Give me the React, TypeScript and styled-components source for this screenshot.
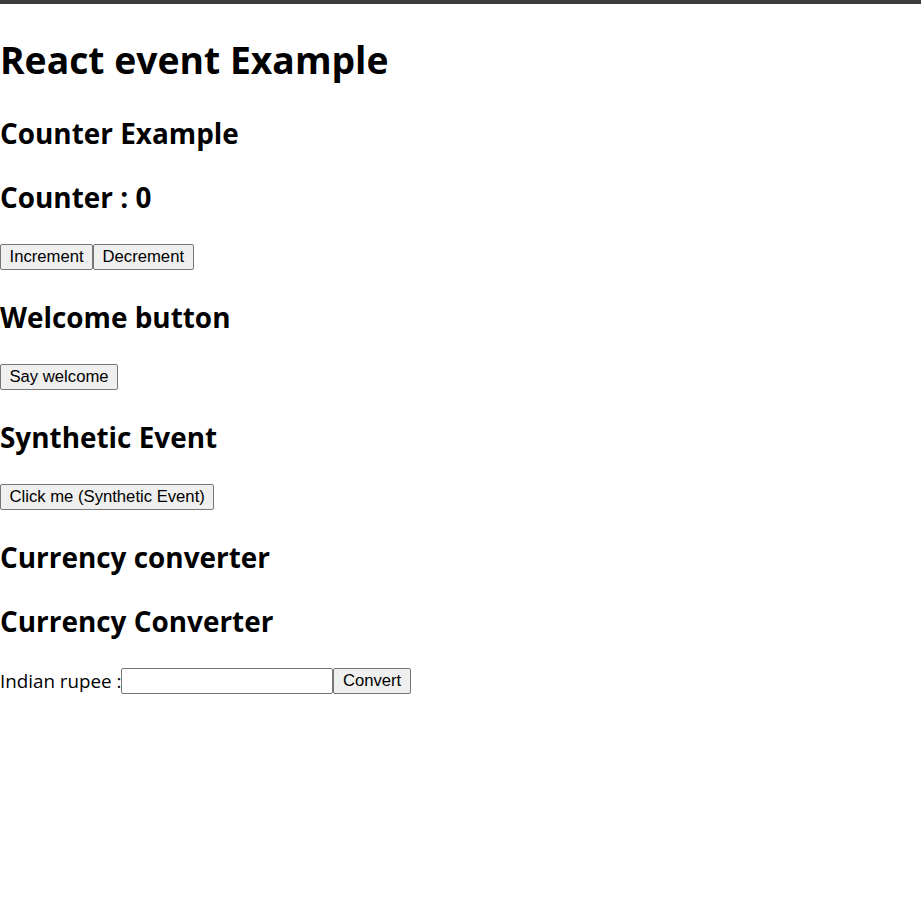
import * as React from 'react'
import styled, { createGlobalStyle } from 'styled-components'

const GlobalStyle = createGlobalStyle`
  html, body {
    margin: 0;
    padding: 0;
    background: #ffffff;
    color: #000000;
    font-family: "Open Sans", "Noto Sans", sans-serif;
  }
`

const TopBar = styled.div`
  height: 4px;
  background: #3c3c3c;
`

const Page = styled.div`
  display: flex;
  flex-direction: column;
  align-items: flex-start;
`

const Title = styled.h1`
  margin: 31px 0 4px;
  font-size: 37.3px;
  line-height: 50px;
  font-weight: 700;
`

const Heading = styled.h2`
  margin: 24px 0 0;
  font-size: 27.9px;
  line-height: 40px;
  font-weight: 700;
`

const Row = styled.div`
  margin: 24px 0 0;
  height: 32px;
  display: flex;
  align-items: center;
`

const Button = styled.button`
  box-sizing: border-box;
  height: 26px;
  padding: 0 8.5px;
  background: #efefef;
  border: 1px solid #767676;
  border-radius: 2px;
  color: #000000;
  font-family: "Liberation Sans", Arial, sans-serif;
  font-size: 16.67px;
  cursor: pointer;
`

const Label = styled.label`
  font-size: 18.8px;
  line-height: 26px;
`

const Input = styled.input`
  box-sizing: border-box;
  width: 212px;
  height: 26px;
  padding: 1px 2px;
  border: 1px solid #767676;
  border-radius: 2px;
  font-size: 16.67px;
  font-family: "Liberation Sans", Arial, sans-serif;
`

const App = () => {
  const [count, setCount] = React.useState(0)
  const [rupee, setRupee] = React.useState('')

  const onConvert = () => {
    const value = parseFloat(rupee)
    if (!isNaN(value)) alert(`Euro: ${(value / 80).toFixed(2)}`)
  }

  return (
    <>
      <GlobalStyle />
      <TopBar />
      <Page>
        <Title>React event Example</Title>
        <Heading>Counter Example</Heading>
        <Heading>Counter : {count}</Heading>
        <Row>
          <Button onClick={() => setCount(count + 1)}>Increment</Button>
          <Button onClick={() => setCount(count - 1)}>Decrement</Button>
        </Row>
        <Heading>Welcome button</Heading>
        <Row>
          <Button onClick={() => alert('Welcome')}>Say welcome</Button>
        </Row>
        <Heading>Synthetic Event</Heading>
        <Row>
          <Button onClick={() => alert('I was clicked')}>Click me (Synthetic Event)</Button>
        </Row>
        <Heading>Currency converter</Heading>
        <Heading>Currency Converter</Heading>
        <Row>
          <Label htmlFor="rupee">Indian rupee :</Label>
          <Input id="rupee" value={rupee} onChange={(e) => setRupee(e.target.value)} />
          <Button onClick={onConvert}>Convert</Button>
        </Row>
      </Page>
    </>
  )
}

export default App
